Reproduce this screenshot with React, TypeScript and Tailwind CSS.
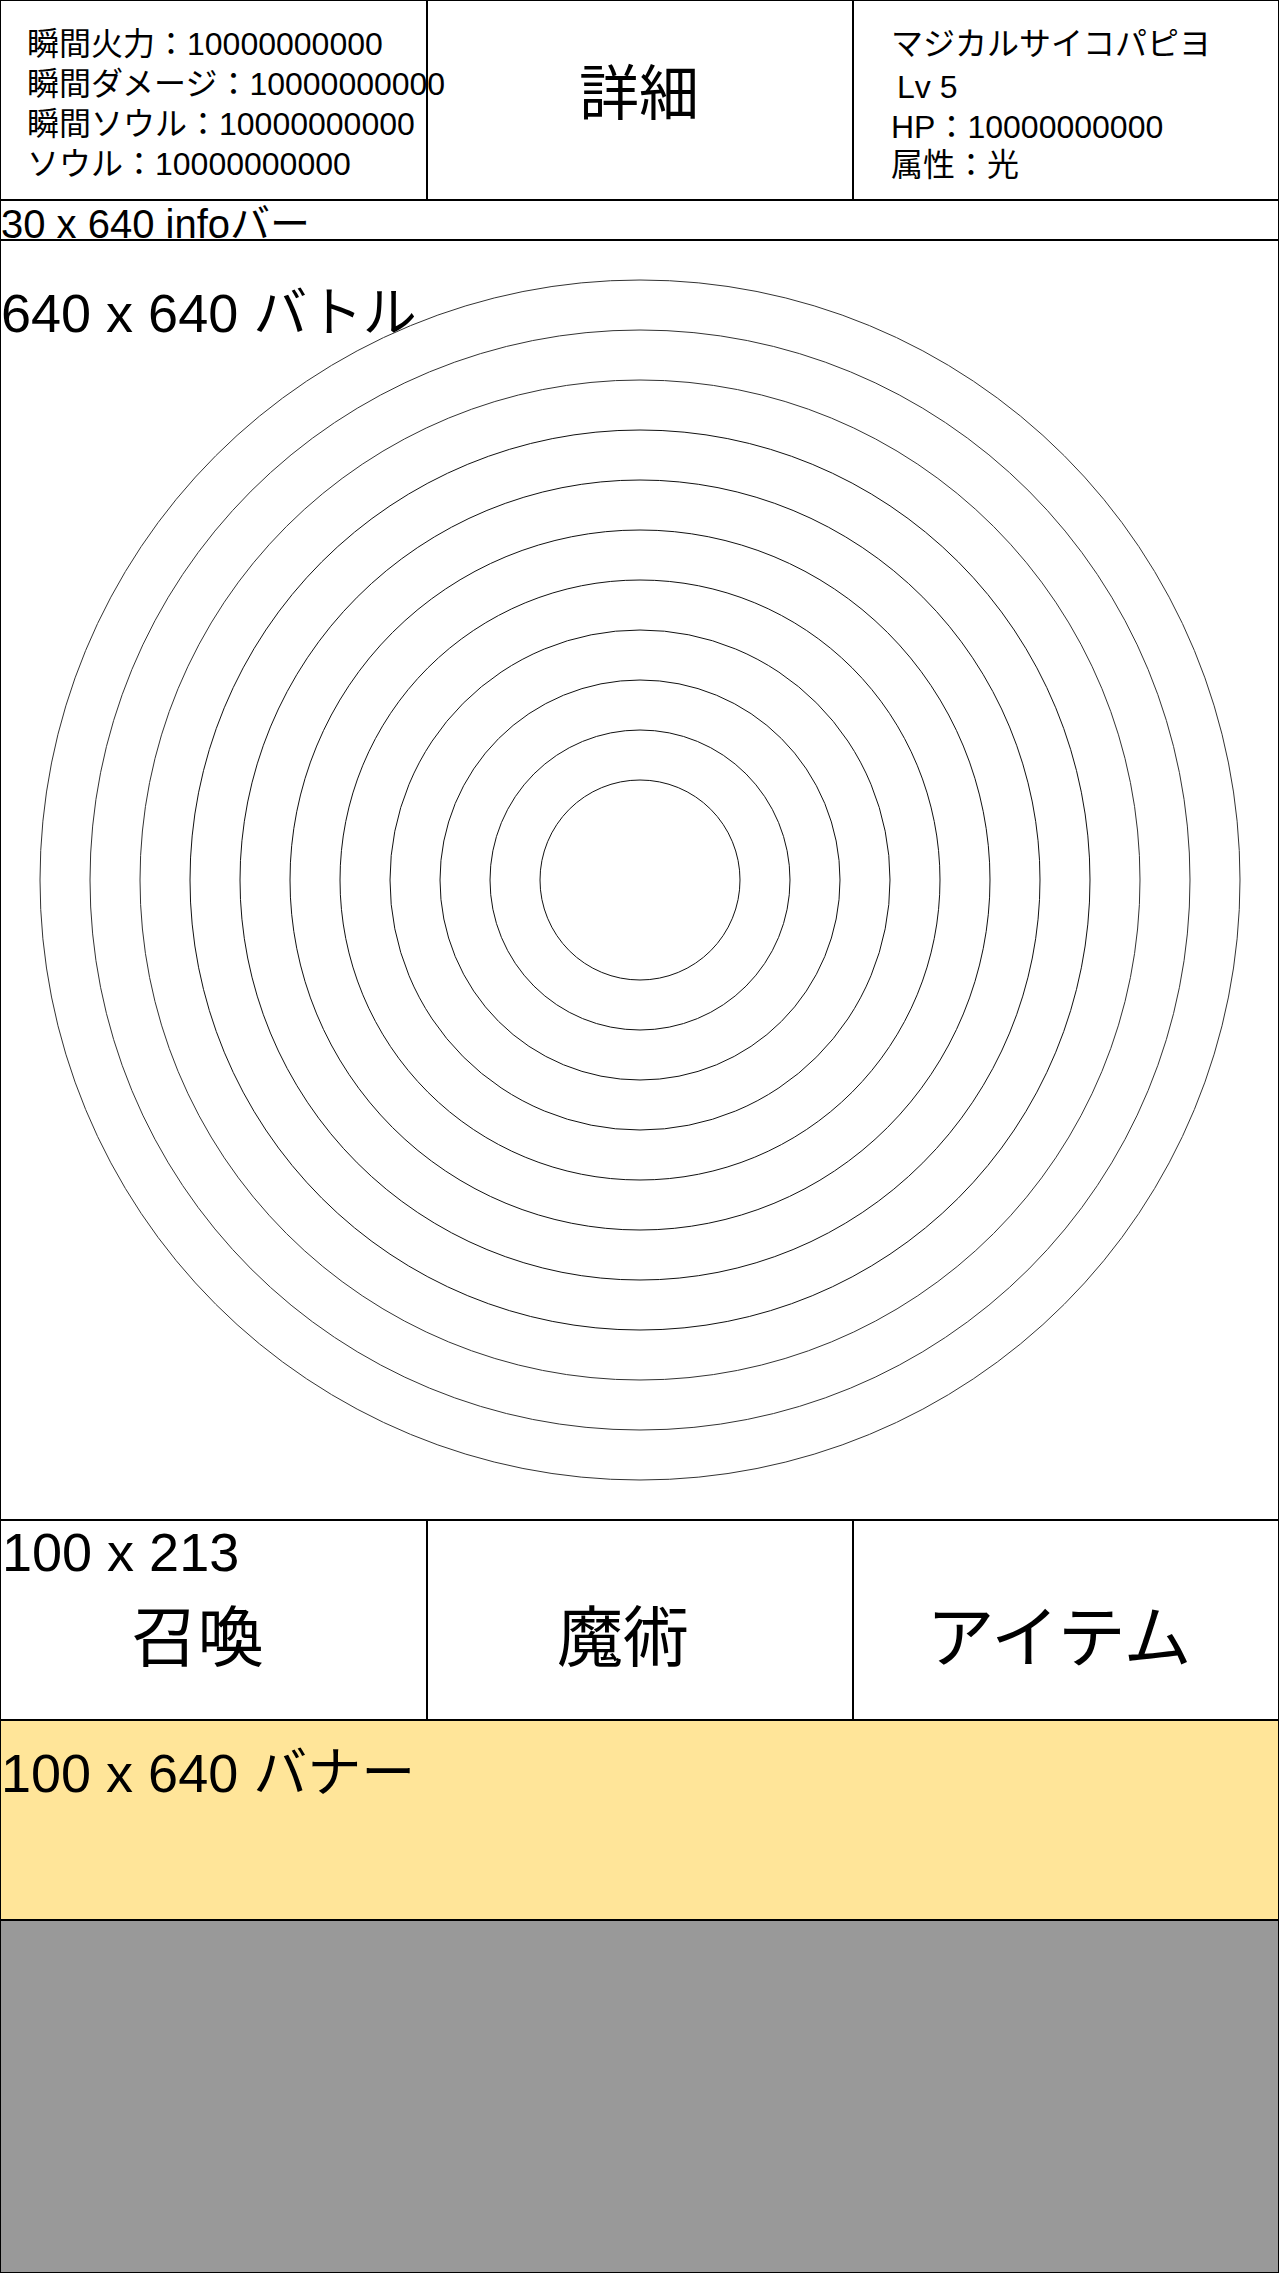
const font = "font-['Liberation_Sans','Noto_Sans_CJK_JP',sans-serif]";

const leftStats = [
  "瞬間火力：10000000000",
  "瞬間ダメージ：10000000000",
  "瞬間ソウル：10000000000",
  "ソウル：10000000000",
];

const radii = [100, 150, 200, 250, 300, 350, 400, 450, 500, 550, 600];

function Target() {
  return (
    <svg
      className="absolute inset-0 pointer-events-none"
      width="1279"
      height="1280"
      viewBox="0 0 1279 1280"
    >
      {radii.map((r) => (
        <circle
          key={r}
          cx="639"
          cy="639"
          r={r}
          fill="none"
          stroke={r > 450 ? "#333" : "#111"}
          strokeWidth="1"
        />
      ))}
    </svg>
  );
}

function CommandCell({ label, shift, children }: { label: string; shift: string; children?: React.ReactNode }) {
  return (
    <div className="relative h-[200px] border border-black flex items-center justify-center">
      {children}
      <div className={"pt-[36px] whitespace-nowrap " + shift}>{label}</div>
    </div>
  );
}

export default function App() {
  return (
    <div className={"w-[1279px] bg-white text-black " + font}>
      {/* header */}
      <div className="grid grid-cols-[427px_426px_426px]">
        <div className="h-[200px] border border-black pt-[23px] pl-[26px] text-[32px] leading-[40px] whitespace-nowrap relative z-10">
          {leftStats.map((s) => (
            <div key={s}>{s}</div>
          ))}
        </div>
        <div className="h-[200px] border border-black flex items-center justify-center">
          <div className="pb-[10px] pr-[2px] text-[60px] leading-[60px]">詳細</div>
        </div>
        <div className="h-[200px] border border-black pt-[23px] pl-[37px] text-[32px] leading-[40px] whitespace-nowrap">
          <div>マジカルサイコパピヨ</div>
          <div className="mt-[3px] ml-[6px]">Lv 5</div>
          <div className="h-[38px]">HP：10000000000</div>
          <div>属性：光</div>
        </div>
      </div>

      {/* info bar */}
      <div className="h-[40px] border border-black pt-[4px] text-[40px] leading-[38px] whitespace-nowrap">
        30 x 640 infoバー
      </div>

      {/* battle */}
      <div className="relative h-[1280px] border border-black overflow-hidden">
        <Target />
        <div className="pt-[45px] text-[54px] leading-[54px] whitespace-nowrap">640 x 640 バトル</div>
      </div>

      {/* commands */}
      <div className="grid grid-cols-[427px_426px_426px]">
        <CommandCell label="召喚" shift="pr-[32px] text-[66px] leading-[66px]">
          <div className="absolute left-[1px] top-[4px] text-[54px] leading-[54px] whitespace-nowrap">100 x 213</div>
        </CommandCell>
        <CommandCell label="魔術" shift="pr-[34px] text-[66px] leading-[66px]" />
        <CommandCell label="アイテム" shift="pr-[14px] text-[68px] leading-[66px]" />
      </div>

      {/* banner */}
      <div className="h-[200px] border border-black bg-[#ffe599] pt-[25px] text-[54px] leading-[54px] whitespace-nowrap">
        100 x 640 バナー
      </div>

      {/* footer */}
      <div className="h-[353px] border border-black bg-[#999999]" />
    </div>
  );
}
